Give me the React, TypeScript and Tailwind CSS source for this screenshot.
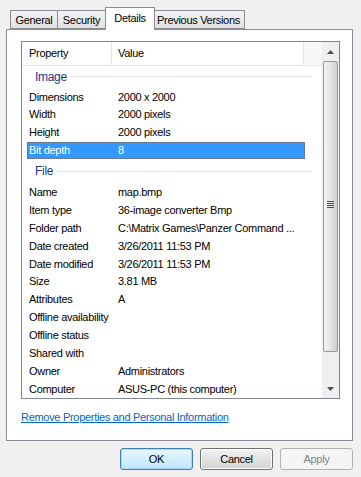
import clsx from "clsx";

type Row = { name: string; value: string; selected?: boolean };

const imageRows: Row[] = [
  { name: "Dimensions", value: "2000 x 2000" },
  { name: "Width", value: "2000 pixels" },
  { name: "Height", value: "2000 pixels" },
  { name: "Bit depth", value: "8", selected: true },
];

const fileRows: Row[] = [
  { name: "Name", value: "map.bmp" },
  { name: "Item type", value: "36-image converter Bmp" },
  { name: "Folder path", value: "C:\\Matrix Games\\Panzer Command ..." },
  { name: "Date created", value: "3/26/2011 11:53 PM" },
  { name: "Date modified", value: "3/26/2011 11:53 PM" },
  { name: "Size", value: "3.81 MB" },
  { name: "Attributes", value: "A" },
  { name: "Offline availability", value: "" },
  { name: "Offline status", value: "" },
  { name: "Shared with", value: "" },
  { name: "Owner", value: "Administrators" },
  { name: "Computer", value: "ASUS-PC (this computer)" },
];

function Tab({ label, active, w }: { label: string; active?: boolean; w: string }) {
  return (
    <div
      className={clsx(
        "flex justify-center border border-[#898c95] -ml-px first:ml-0",
        w,
        active
          ? "h-[23px] -mb-px relative z-10 bg-white border-b-0 pt-[2px] -mx-[2px] px-[2px]"
          : "h-[19px] bg-gradient-to-b from-[#f3f3f3] to-[#e1e1e1] pt-[1px]"
      )}
    >
      {label}
    </div>
  );
}

function GroupHeading({ label, h }: { label: string; h: string }) {
  return (
    <div className={clsx("flex items-center pl-[13px] pr-[10px]", h)}>
      <span className="text-[#1e3287] text-[12px] pr-[4px]">{label}</span>
      <div className="flex-1 h-px bg-[#dde1ea]" />
    </div>
  );
}

function ItemRow({ row }: { row: Row }) {
  return (
    <div className="h-[18px] flex pl-[5px] pr-[17px]">
      <div
        className={clsx(
          "flex flex-1 items-center pl-[2px]",
          row.selected && "bg-[#3399ff] text-white outline outline-1 outline-dotted outline-[#5a6b80] -outline-offset-1"
        )}
      >
        <span className="w-[89px] whitespace-nowrap overflow-hidden">{row.name}</span>
        <span className="whitespace-nowrap">{row.value}</span>
      </div>
    </div>
  );
}

function Arrow({ up }: { up?: boolean }) {
  return (
    <svg width="7" height="4" viewBox="0 0 7 4" className={clsx(!up && "rotate-180")}>
      <path d="M3.5 0 L7 4 L0 4 Z" fill="#4d4d4d" />
    </svg>
  );
}

function ScrollBar() {
  return (
    <div className="w-[17px] flex flex-col bg-[#efefef]">
      <div className="h-[19px] flex items-center justify-center">
        <Arrow up />
      </div>
      <div className="h-[291px] mx-px border border-[#979797] rounded-[2px] bg-gradient-to-r from-[#f4f4f4] via-[#e4e4e4] to-[#cfcfcf] flex items-center justify-center">
        <div className="flex flex-col gap-[1px] -mt-[4px]">
          <div className="w-[7px] h-px bg-[#4e4e4e]" />
          <div className="w-[7px] h-px bg-[#4e4e4e]" />
          <div className="w-[7px] h-px bg-[#4e4e4e]" />
          <div className="w-[7px] h-px bg-[#4e4e4e]" />
        </div>
      </div>
      <div className="flex-1 flex items-end justify-center pb-[7px]">
        <Arrow />
      </div>
    </div>
  );
}

function Button({ label, variant }: { label: string; variant: "default" | "normal" | "disabled" }) {
  return (
    <div
      className={clsx(
        "w-[73px] h-[22px] rounded-[3px] border flex items-center justify-center",
        variant === "default" &&
          "border-[#3c7fb1] bg-gradient-to-b from-[#eaf6fd] to-[#bee6fd] shadow-[inset_0_0_0_1px_#a8d8f5]",
        variant === "normal" &&
          "border-[#707070] bg-gradient-to-b from-[#f2f2f2] to-[#d4d4d4] shadow-[inset_0_0_0_1px_#fcfcfc]",
        variant === "disabled" && "border-[#adb2b5] bg-[#f4f4f4] text-[#838383]"
      )}
    >
      {label}
    </div>
  );
}

export default function App() {
  return (
    <div
      className="w-[361px] h-[477px] bg-[#f0f0f0] text-[11px] tracking-[-0.3px] text-black overflow-hidden flex flex-col"
      style={{ fontFamily: '"Liberation Sans", Arial, sans-serif' }}
    >
      <div className="flex items-end pl-[10px] pt-[7px] h-[29px]">
        <Tab label="General" w="w-[48px]" />
        <Tab label="Security" w="w-[49px]" />
        <Tab label="Details" w="w-[50px]" active />
        <Tab label="Previous Versions" w="w-[93px]" />
      </div>

      <div className="ml-[6px] w-[347px] h-[412px] border border-[#898c95] bg-white pl-[14px] pt-[11px]">
        <div className="w-[319px] h-[358px] border border-[#828790] flex overflow-hidden">
          <div className="flex-1 flex flex-col overflow-hidden">
            <div className="h-[24px] flex border-b border-[#e5e5e5] shrink-0">
              <div className="w-[90px] pl-[7px] flex items-center border-r border-[#e5e5e5]">Property</div>
              <div className="w-[192px] pl-[6px] flex items-center border-r border-[#e5e5e5]">Value</div>
              <div className="flex-1 bg-[#f7f7f7]" />
            </div>
            <GroupHeading label="Image" h="h-[22px]" />
            {imageRows.map((r) => (
              <ItemRow key={r.name} row={r} />
            ))}
            <GroupHeading label="File" h="h-[24px]" />
            {fileRows.map((r) => (
              <ItemRow key={r.name} row={r} />
            ))}
          </div>
          <ScrollBar />
        </div>
        <div className="mt-[10px]">
          <a className="text-[#0066cc] underline">Remove Properties and Personal Information</a>
        </div>
      </div>

      <div className="flex pl-[120px] gap-[7px] mt-[7px]">
        <Button label="OK" variant="default" />
        <Button label="Cancel" variant="normal" />
        <Button label="Apply" variant="disabled" />
      </div>
    </div>
  );
}
